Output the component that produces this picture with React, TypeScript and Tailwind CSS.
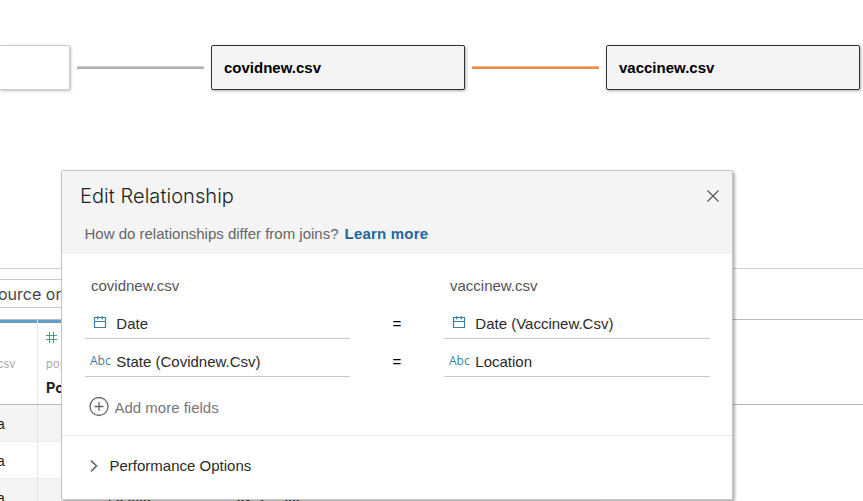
import type { ReactNode } from "react";

function TableNode({ name }: { name: string }) {
  return (
    <div className="flex h-[45px] w-[254px] shrink-0 items-center rounded-xs border border-[#333] bg-[#f4f4f4] pl-3 text-[15px] font-bold text-black shadow-[1px_1px_3px_rgba(0,0,0,0.35)]">
      <span className="mt-px">{name}</span>
    </div>
  );
}

function CalendarIcon() {
  return (
    <svg width="14" height="14" viewBox="0 0 14 14" fill="none" stroke="#3d7f9e" className="mr-[9px] ml-2 -mt-[3px] shrink-0">
      <path d="M1.5 2.5H12.5V12.5H1.5Z M1.5 6.5H12.5" strokeWidth="1.2" />
      <path d="M4.8 1V4.5 M9.2 1V4.5" strokeWidth="1.2" />
    </svg>
  );
}

function Abc() {
  return (
    <span className="-mt-px ml-[5px] w-[26px] shrink-0 font-['Open_Sans',sans-serif] text-[12px] font-medium text-[#3d7f9e]">Abc</span>
  );
}

function Field({ icon, children }: { icon: ReactNode; children: ReactNode }) {
  return (
    <div className="flex h-[38px] items-center border-b border-[#c8c8c8] pt-2 text-[15px] text-[#2a2a2a]">
      {icon}
      <span className="mt-[2px] ml-[0.3px] whitespace-nowrap">{children}</span>
    </div>
  );
}

function Dialog() {
  return (
    <div className="absolute top-[170px] left-[61px] h-[330px] w-[672px] rounded-xs border border-[#c4c4c4] bg-white shadow-[2px_2px_3px_rgba(0,0,0,0.3)]">
      <header className="h-[83px] bg-[#f4f4f4] pt-[11px]">
        <div className="flex items-start justify-between pr-[13px] pl-[18px]">
          <h1 className="font-['Inter',sans-serif] text-[20px] leading-7 font-light tracking-[0.06px] text-[#222]">Edit Relationship</h1>
          <svg width="12" height="12" viewBox="0 0 12 12" stroke="#555" strokeWidth="1.2" className="mt-2">
            <path d="M.5.5l11 11M11.5.5l-11 11" />
          </svg>
        </div>
        <p className="mt-[14px] ml-[22.5px] text-[15px] leading-5 text-[#666]">
          How do relationships differ from joins?
          <b className="ml-[6px] tracking-[0.2px] text-[#1f6799]">Learn more</b>
        </p>
      </header>
      <div className="h-[182px] border-b border-[#e4e4e4] pl-[23px]">
        <div className="grid grid-cols-[265px_94px_266px] text-[15px]">
          <div className="h-[47px] pt-[22px] pl-[6px] leading-5 text-[#555]">covidnew.csv</div>
          <div />
          <div className="h-[47px] pt-[22px] pl-[6px] leading-5 text-[#555]">vaccinew.csv</div>
          <Field icon={<CalendarIcon />}>Date</Field>
          <div className="pt-[13px] text-center leading-5">=</div>
          <Field icon={<CalendarIcon />}>Date (Vaccinew.Csv)</Field>
          <Field icon={<Abc />}>State (Covidnew.Csv)</Field>
          <div className="pt-[13px] text-center leading-5">=</div>
          <Field icon={<Abc />}>Location</Field>
        </div>
        <div className="mt-[19px] ml-1 flex items-center text-[15px] leading-5 text-[#777]">
          <svg width="20" height="20" viewBox="0 0 20 20" fill="none" stroke="#666" strokeWidth="1.3">
            <circle cx="10" cy="9.5" r="9" />
            <path d="M10 5v9M5.5 9.5h9" />
          </svg>
          <span className="mt-[2px] ml-[5.5px]">Add more fields</span>
        </div>
      </div>
      <div className="flex h-[60px] items-center pl-7 text-[15px] text-[#2a2a2a]">
        <svg width="8" height="12" viewBox="0 0 8 12" fill="none" stroke="#666" strokeWidth="1.6" className="mr-[11.5px]">
          <path d="M1 .7L6.5 6L1 11.3" />
        </svg>
        Performance Options
      </div>
    </div>
  );
}

function DataGrid() {
  return (
    <div className="mt-[11px] border-t border-[#b8b8b8]">
      <div className="flex h-[84px]">
        <div className="w-[37px] border-t-[3px] border-[#5f9fc6] pt-[33px] font-['Inter',sans-serif] text-[11px] leading-4 text-[#aaa]">
          <div className="-ml-[6px]">.csv</div>
        </div>
        <div className="ml-px w-[180px] border-t-[3px] border-[#5f9fc6] pl-[8px] font-['Inter',sans-serif] shadow-[-1px_0_0_#e5e5e5]">
          <svg width="11" height="11" viewBox="0 0 11 11" stroke="#3fa287" strokeWidth="1.1" className="mt-[9px]">
            <path d="M3.5 0V11M7.5 0V11M0 3.5H11M0 7.5H11" />
          </svg>
          <div className="mt-[13px] text-[11px] leading-4 tracking-[0.3px] text-[#aaa]">population</div>
          <div className="mt-[6px] text-[14.5px] leading-5 font-bold text-[#222]">Population</div>
        </div>
      </div>
      <div className="border-t border-[#b8b8b8] text-[14px] text-[#222]">
        {[0, 1, 2].map((row) => (
          <div key={row} className="flex h-[37px] w-[600px] border-b border-[#ececec] odd:bg-[#f4f4f4]">
            <div className="w-[38px] border-r border-[#e5e5e5] pt-[9px] leading-5">
              <span className="-ml-[3px]">a</span>
            </div>
            {row === 2 && (
              <div className="flex gap-[86px] pt-[15px] pl-[70px] leading-5">
                <span>53,903</span>
                <span>31-Jan-00</span>
              </div>
            )}
          </div>
        ))}
      </div>
    </div>
  );
}

export default function App() {
  return (
    <main className="relative h-[501px] w-[863px] overflow-hidden bg-white font-['Liberation_Sans',Arial,sans-serif]">
      <section className="flex h-[268px] items-start pt-[45px]">
        <div className="h-[45px] w-[70px] shrink-0 rounded-r-xs border border-l-0 border-[#ccc] bg-white shadow-[1px_1px_3px_rgba(0,0,0,0.25)]" />
        <div className="mx-[7px] mt-[21px] h-[3px] w-[127px] shrink-0 border-t border-[#d0d0d0] bg-[#b0b0b0]" />
        <TableNode name="covidnew.csv" />
        <div className="mx-[7px] mt-[21px] h-[3px] w-[127px] shrink-0 border-t border-[#f6b98f] bg-[#ee8940]" />
        <TableNode name="vaccinew.csv" />
      </section>
      <section className="border-t border-[#d0d0d0] pt-[10px]">
        <div className="h-[29px] w-[300px] overflow-hidden border-y border-[#c8c8c8] pt-1 font-['Inter',sans-serif] text-[16px] leading-5 whitespace-nowrap text-[#444]">
          <span className="-ml-[2px]">ource order</span>
        </div>
        <DataGrid />
      </section>
      <Dialog />
    </main>
  );
}
